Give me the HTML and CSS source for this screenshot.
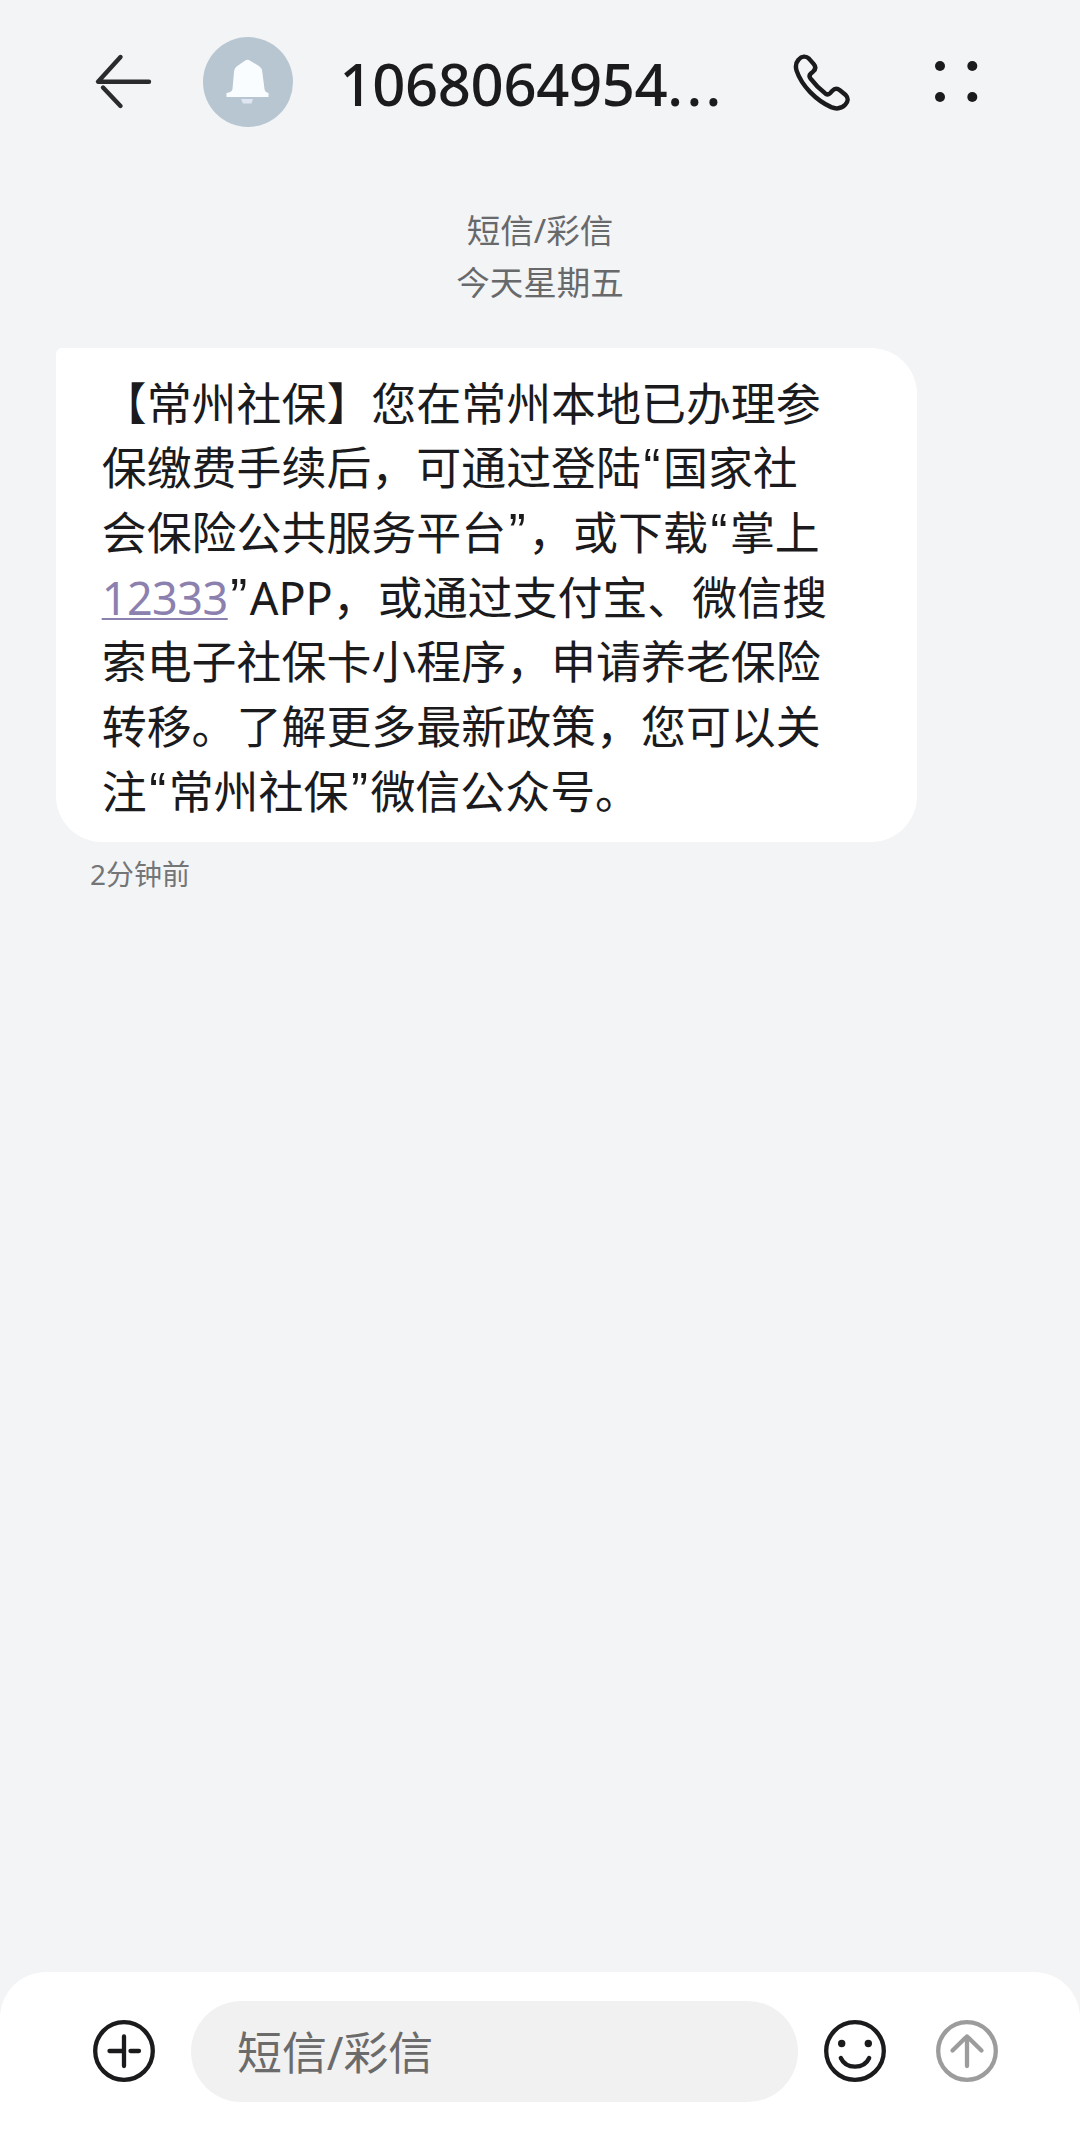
FILE: index.html
```html
<!DOCTYPE html>
<html lang="zh-CN">
<head>
<meta charset="utf-8">
<title>短信</title>
<link rel="stylesheet" href="styles.css">
</head>
<body>
<div class="screen">
  <header class="topbar">
    <svg class="back" viewBox="0 0 60 60"><path d="M26.500 5 4 29.700H55M9 35.500 26.500 54"/></svg>
    <svg class="avatar" viewBox="0 0 90 90">
      <circle cx="45" cy="45" r="45" fill="#b7c6d1"/>
      <path d="M41.500 24Q44.500 21.500 47.500 24L56 29Q59 31 59.300 35L61.500 52Q62 55.500 65.500 56V60H23.500V56Q29 55.500 29.500 52L31 35Q31.300 30.500 35 28.500Z" fill="#fafdff"/>
      <path d="M38 62h12l-1.500 4.500h-8.500Z" fill="#dfe5f2"/>
    </svg>
    <h1 class="number">1068064954<span class="dots">...</span></h1>
    <svg class="phone" viewBox="0 0 60 60"><path d="M5.800 6.800C9 3 13.500 2.800 16.500 5.800L21.500 11.500C24 14.500 23.500 17 20.500 19.500L18.500 21.200C17 22.500 16.800 24.500 18 26.200C22 31.500 28 37.800 33.500 42C35.500 43.300 37.200 43 38.500 41.500L40.500 39.200C43 36.500 46 36.500 48.500 38.500L54.500 43.500C57.500 46.500 57 50.500 54 53.500C50 57.500 45.500 58.500 39.500 56C24 49 9 34 3.800 18.500C2.300 14 3 10 5.800 6.800Z"/></svg>
    <svg class="more" viewBox="0 0 44 44"><circle cx="6" cy="6" r="5"/><circle cx="38.300" cy="6" r="5"/><circle cx="6" cy="37" r="5"/><circle cx="38.300" cy="37" r="5"/></svg>
  </header>

  <main class="thread">
    <div class="meta"><div>短信/彩信</div><div>今天星期五</div></div>
    <div class="bubble">
      <div>【常州社保】您在常州本地已办理参</div>
      <div>保缴费手续后，可通过登陆<span class="quote">“</span>国家社</div>
      <div>会保险公共服务平台<span class="quote">”</span>，或下载<span class="quote">“</span>掌上</div>
      <div><a class="link">12333</a><span class="quote">”</span>APP，或通过支付宝、微信搜</div>
      <div>索电子社保卡小程序，申请养老保险</div>
      <div>转移。了解更多最新政策，您可以关</div>
      <div>注<span class="quote">“</span>常州社保<span class="quote">”</span>微信公众号。</div>
    </div>
    <div class="time">2分钟前</div>
  </main>

  <footer class="composer">
    <svg class="round add" viewBox="0 0 62 62"><circle cx="31" cy="31" r="28.800"/><path d="M31 16.500V46M16.500 31H31M37.500 31H46"/></svg>
    <div class="field">短信/彩信</div>
    <svg class="round smile" viewBox="0 0 62 62"><circle cx="31" cy="31" r="28.800"/><path d="M16.800 38C22 49.500 40 49.500 45.200 38"/><circle class="eye" cx="17.700" cy="23.500" r="3.700"/><circle class="eye" cx="44.300" cy="23.500" r="3.700"/></svg>
    <svg class="round send" viewBox="0 0 62 62"><circle cx="31" cy="31" r="28.800"/><path d="M31 16.500V46M16.500 30.500 29.500 17.700Q31 16.200 32.500 17.700L45.500 30.500"/></svg>
  </footer>
</div>
</body>
</html>
```
FILE: styles.css
```css
* { box-sizing: border-box; }
body {
  margin: 0;
  background: #f3f4f6;
  color: #1b1b1d;
  font-family: "Noto Sans", "Noto Sans CJK SC", sans-serif;
  text-spacing-trim: space-all;
}
.screen {
  width: 1080px;
  height: 2130px;
  display: flex;
  flex-direction: column;
}
svg { display: block; flex: none; }
.topbar {
  height: 164px;
  padding-left: 94px;
  display: flex;
  align-items: center;
}
.back { width: 60px; height: 60px; fill: none; stroke: #2b2b2d; stroke-width: 4.400; stroke-linecap: round; stroke-linejoin: round; }
.avatar { width: 90px; height: 90px; margin-left: 48.500px; }
.number {
  width: 390px;
  margin: 0 0 0 47px;
  font-size: 58px;
  line-height: 80px;
  font-weight: 500;
  letter-spacing: -0.400px;
  white-space: nowrap;
  padding-top: 4px;
}
.dots { letter-spacing: 3.400px; }
.phone { width: 58px; height: 58px; margin-left: 63px; fill: none; stroke: #1b1b1d; stroke-width: 4.600; stroke-linejoin: round; }
.more { width: 44px; height: 44px; margin-left: 83.500px; fill: #1b1b1d; }
.thread {
  flex: 1;
  display: flex;
  flex-direction: column;
  align-items: flex-start;
  padding: 40px 56px 0;
}
.meta {
  align-self: center;
  text-align: center;
  font-size: 33.500px;
  line-height: 52px;
  color: #68696b;
}
.bubble {
  width: 861px;
  height: 494px;
  margin-top: 40px;
  padding: 23.500px 0 0 45.700px;
  border-radius: 6px 46px 46px 46px;
  background: #fff;
  font-size: 44.940px;
  line-height: 64.700px;
  white-space: nowrap;
}
.link { color: #8b80ae; letter-spacing: -0.500px; text-decoration: underline; text-decoration-thickness: 2px; text-underline-offset: 3px; text-decoration-skip-ink: none; }
.quote { display: inline-block; width: 22px; text-align: center; font-family: "Liberation Sans", sans-serif; font-size: 51px; line-height: 0.9; letter-spacing: 0; }
.time {
  margin: 13px 0 0 34px;
  font-size: 28px;
  line-height: 38px;
  color: #747577;
}
.composer {
  height: 158px;
  padding: 29px 0 0 92.700px;
  display: flex;
  align-items: flex-start;
  background: #fff;
  border-radius: 46px 46px 0 0;
}
.round { width: 62px; height: 62px; margin-top: 19px; fill: none; stroke: #1b1b1d; stroke-width: 4.300; stroke-linecap: round; stroke-linejoin: round; }
.field {
  width: 607px;
  height: 101px;
  margin-left: 36.300px;
  padding-left: 46px;
  border-radius: 51px;
  background: #f1f1f1;
  color: #6b6b6b;
  font-size: 44.900px;
  line-height: 104px;
}
.smile { margin-left: 26px; }
.eye { fill: #1b1b1d; stroke: none; }
.send { margin-left: 50.300px; stroke: #9c9c9c; }
```
